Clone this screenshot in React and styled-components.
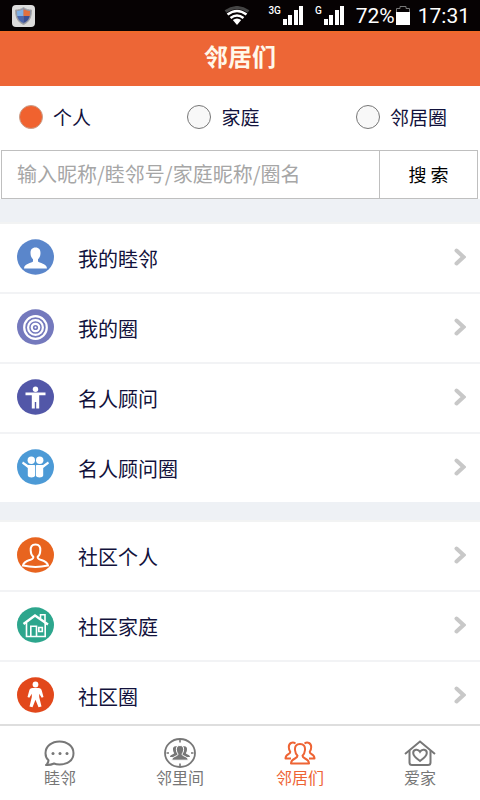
import React, { useState } from 'react'
import styled, { createGlobalStyle } from 'styled-components'

const GlobalStyle = createGlobalStyle`
  * { box-sizing: border-box; }
  body {
    margin: 0;
    background: #eef1f5;
    font-family: "Noto Sans CJK SC", "Noto Sans", sans-serif;
    color: #12123c;
  }
  button, input { font-family: inherit; }
`

const Page = styled.div`
  display: flex;
  flex-direction: column;
  height: 100vh;
`

const StatusBar = styled.div`
  display: flex;
  align-items: center;
  flex: none;
  height: 31px;
  padding: 0 10px 0 12px;
  background: #060203;
  color: #fff;
  font-family: Roboto, sans-serif;
  font-size: 21px;

  svg { display: block; }
`

const Spacer = styled.div`
  flex: 1;
`

const Signal = styled.div`
  display: flex;
  gap: 2px;
  margin-right: ${p => (p.$wide ? 18 : 12)}px;
`

const Network = styled.span`
  font-size: 10px;
  line-height: 10px;
  font-weight: 500;
`

const Battery = styled.div`
  display: flex;
  align-items: center;
  gap: 1px;
  margin-right: 8px;
`

const Header = styled.header`
  flex: none;
  height: 55px;
  background: #ed6636;
  border-top: 2px solid #f06a2a;
  color: #fff8ea;
  text-align: center;

  h1 {
    margin: 0;
    font-size: 24px;
    line-height: 46px;
    font-weight: 700;
  }
`

const Content = styled.main`
  flex: 1;
  min-height: 0;
  overflow-y: auto;
  scrollbar-width: none;
`

const SearchPanel = styled.form`
  background: #fff;
`

const Options = styled.div`
  display: flex;
  justify-content: space-between;
  align-items: center;
  height: 64px;
  padding: 0 33px 2px 19px;
`

const Option = styled.label`
  display: flex;
  align-items: center;
  gap: 10px;
  font-size: 19px;
  line-height: 24px;
`

const Radio = styled.input`
  appearance: none;
  width: 24px;
  height: 24px;
  margin: 0;
  border: 1px solid #777;
  border-radius: 50%;
  background: #f8f8f8;

  &:checked {
    border-color: #c9a08c;
    background: #f0622f;
  }
`

const SearchBox = styled.div`
  display: flex;
  height: 49px;
  margin: 0 2px 0 1px;
  border: 1px solid #bfbfbf;
`

const SearchInput = styled.input`
  flex: 1;
  min-width: 0;
  padding: 0 15px 2px;
  border: 0;
  background: #fff;
  font-size: 20px;
  outline: none;

  &::placeholder { color: #a6a6a6; }
`

const SearchButton = styled.button`
  width: 98px;
  padding: 0 0 2px;
  border: 0;
  border-left: 1px solid #bfbfbf;
  background: #fff;
  color: #000;
  font-size: 18px;
`

const Menu = styled.nav`
  margin-top: ${p => p.$gap}px;
  border-top: 2px solid #f2f3f3;
  background: #fff;
`

const MenuRow = styled.a`
  display: flex;
  align-items: center;
  height: 70px;
  padding: 0 14px 2px 17px;
  border-bottom: 2px solid #f2f3f5;
  color: #12123c;
  font-size: 20px;
  text-decoration: none;

  &:last-child {
    height: 68px;
    border-bottom: 0;
  }
`

const RowLabel = styled.span`
  flex: 1;
  padding: 2px 0 0 24px;
`

const TabBar = styled.nav`
  display: grid;
  grid-template-columns: repeat(4, 1fr);
  flex: none;
  height: 76px;
  border-top: 2px solid #dedede;
  background: #fff;
`

const Tab = styled.a`
  display: flex;
  flex-direction: column;
  align-items: center;
  padding-top: 11px;
  color: ${p => (p.$active ? '#ee6434' : '#777')};
  font-size: 16px;
  line-height: 18px;
  text-decoration: none;
`

const ShieldIcon = () => (
  <svg width="23" height="22" viewBox="0 0 23 22" aria-hidden="true">
    <rect width="23" height="22" rx="4" fill="#dcdcdc" />
    <path d="M11.500 2.500 C9 4.500 6 5 3.500 5 C3.500 12 5.500 17 11.500 19.500 C17.500 17 19.500 12 19.500 5 C17 5 14 4.500 11.500 2.500Z" fill="#8c93a6" stroke="#a5a5a5" />
    <path d="M11.500 4 C9 5.500 7 6 5 6 L5.300 11 H11.500Z" fill="#7fb0e6" />
    <path d="M11.500 4 C14 5.500 16 6 18 6 L17.700 11 H11.500Z" fill="#e2703f" />
    <path d="M5.300 11 H11.500 V18 C8 16.500 6 14.500 5.300 11Z" fill="#4a68b0" />
    <path d="M17.700 11 H11.500 V18 C15 16.500 17 14.500 17.700 11Z" fill="#3c4f94" />
  </svg>
)

const WifiIcon = () => (
  <svg width="26" height="19" viewBox="0 0 26 19" fill="none" aria-hidden="true">
    <path d="M1.500 5.500 Q13 -2.500 24.500 5.500" stroke="#444" strokeWidth="3" />
    <path d="M3.500 8.500 Q13 1.500 22.500 8.500" stroke="#fff" strokeWidth="2.600" />
    <path d="M6.500 12 Q13 7 19.500 12" stroke="#fff" strokeWidth="2.600" />
    <path d="M8.800 14 Q13 11 17.200 14 L13 19Z" fill="#fff" />
  </svg>
)

const BarsIcon = () => (
  <svg width="20" height="19" viewBox="0 0 20 19" fill="#fff" aria-hidden="true">
    <path d="M0 13h4v6H0zM5 9h4v10H5zM11 4h4v15h-4zM16 0h4v19h-4z" />
  </svg>
)

const BatteryIcon = () => (
  <svg width="14" height="19" viewBox="0 0 14 19" aria-hidden="true">
    <path d="M.5 18.500V2.500H4V.5H10V2.500H13.500V18.500Z" fill="none" stroke="#777" />
    <path d="M0 6H14V19H0z" fill="#fff" />
  </svg>
)

const Chevron = () => (
  <svg width="12" height="18" viewBox="0 0 12 18" fill="none" stroke="#c8c8c8" strokeWidth="4" aria-hidden="true">
    <path d="M2.500 2.500 L9.500 9 L2.500 15.500" strokeLinecap="round" />
  </svg>
)

// round badge behind every menu drawing
const Badge = ({ color, children }) => (
  <svg width="37" height="36" viewBox="0 0 37 36" aria-hidden="true">
    <ellipse cx="18.500" cy="18" rx="18.500" ry="17.700" fill={color} />
    {children}
  </svg>
)

const icons = {
  person: (
    <Badge color="#5a86cb">
      <path d="M18.500 8.500c-3.500 0-5 2.300-5 5.500 0 2.800 1 5 2.500 6.300v2.200c-1 1.500-9 2-9 7h23c0-5-8-5.500-9-7v-2.200c1.500-1.300 2.500-3.500 2.500-6.300 0-3.200-1.500-5.500-5-5.500z" fill="#fff" />
    </Badge>
  ),
  circles: (
    <Badge color="#7479bd">
      <g fill="none" stroke="#fff" strokeWidth="2.200">
        <circle cx="18.500" cy="18.500" r="11.300" />
        <circle cx="18.500" cy="18.500" r="7.400" />
        <circle cx="18.500" cy="18.500" r="3.700" />
      </g>
      <circle cx="18.500" cy="18.500" r="1" fill="#fff" />
    </Badge>
  ),
  advisor: (
    <Badge color="#5257a8">
      <circle cx="18.500" cy="10.300" r="2.700" fill="#fff" />
      <path d="M8.500 13.500h20v2.700h-6.300V29.500h-3v-6.500h-1.400v6.500h-3V16.200H8.500z" fill="#fff" />
    </Badge>
  ),
  pair: (
    <Badge color="#4c9ad6">
      <g fill="#fff">
        <circle cx="14.300" cy="11.300" r="3.700" />
        <circle cx="22.700" cy="11.300" r="3.700" />
        <path d="M6 12.500l5 3.500h6c.7 0 1.100.4 1.100 1v9.500c0 2.500-7.300 2.500-7.300 0v-7.500L5 14.500z" />
        <path d="M31 12.500L26 16h-6c-.7 0-1.100.4-1.100 1v9.500c0 2.500 7.300 2.500 7.300 0v-7.500l5.800-4.500z" />
      </g>
    </Badge>
  ),
  resident: (
    <Badge color="#e8641f">
      <path d="M18.500 7.500c-3.800 0-5 2.500-4.800 6 .1 2.800 1 5 2.600 6.300.4 2-.8 2.200-3 3-3.600 1.200-6.800 2.700-7.300 5.700 7 1.600 18 1.600 25 0-.5-3-3.700-4.500-7.300-5.700-2.200-.8-3.400-1-3-3 1.600-1.300 2.500-3.500 2.600-6.300.2-3.500-1-6-4.800-6z" fill="none" stroke="#fff" strokeWidth="2" />
    </Badge>
  ),
  family: (
    <Badge color="#2da68d">
      <g fill="none" stroke="#fff" strokeWidth="1.600">
        <path d="M6.500 17L18 8.500 31 17.500" strokeWidth="2.400" />
        <path d="M9.500 16v13.500h18.700V16" />
        <path d="M23.500 11.500V7.700h4.500v6.800" />
        <path d="M13.800 29V19.200h5.700V29" />
        <path d="M21.800 20.500h3.500v4h-3.500z" />
      </g>
    </Badge>
  ),
  walker: (
    <Badge color="#e2481b">
      <circle cx="18.500" cy="7.500" r="2.900" fill="#fff" />
      <path d="M15.500 11h6c2 0 2.800 1 3.300 2.800l1.700 6.200-1.800.8-2.500-4v3.200l2.300 9.500-3 .7-3-7.500-3 7.500-3-.7 2.300-9.500v-3.200l-2.500 4-1.800-.8 1.700-6.200c.5-1.800 1.300-2.800 3.300-2.800z" fill="#fff" />
    </Badge>
  ),
}

const ChatIcon = () => (
  <svg width="32" height="31" viewBox="0 0 32 31" aria-hidden="true">
    <path d="M4.500 23.300C2.500 21.500 1.500 19 1.500 16.200 1.500 9 8 4.500 15.500 4.500s14 4.500 14 11.700S23.500 27.500 15.500 27.500c-2 0-4-.3-5.500-1-2.500 1.300-5 1.700-8 1.500 1.500-1 2.300-2.700 2.500-4.700z" fill="none" stroke="currentColor" strokeWidth="2" strokeLinejoin="round" />
    <g fill="currentColor">
      <circle cx="9" cy="16.500" r="1.500" />
      <circle cx="16" cy="16.500" r="1.500" />
      <circle cx="23" cy="16.500" r="1.500" />
    </g>
  </svg>
)

const CircleIcon = () => (
  <svg width="32" height="31" viewBox="0 0 32 31" aria-hidden="true">
    <ellipse cx="16" cy="16" rx="15" ry="14" fill="none" stroke="currentColor" strokeWidth="1.800" />
    <path d="M16 3v2.500M16 26.500v2.500M2.500 16H5M27 16h2.500" stroke="currentColor" strokeWidth="1.600" />
    <g fill="currentColor">
      <path d="M13 9.500c-3-.6-4.300.8-4 3.200.1 1.600.6 2.600 1.200 3.300-.2 1.500-4.200 1.500-4.200 4h6l2.500-2.500c-1.800-1.500-3-5-1.500-8z" />
      <path d="M19 9.500c3-.6 4.300.8 4 3.200-.1 1.600-.6 2.600-1.200 3.300.2 1.500 4.200 1.500 4.200 4h-6L17.500 17.500c1.800-1.500 3-5 1.500-8z" />
      <path d="M16 8.500c-2.700 0-3.800 1.700-3.600 4.200.1 1.900.8 3.400 1.700 4.300-.2 2.500-6.100 2-6.300 6.200h16.400c-.2-4.200-6.100-3.700-6.300-6.200.9-.9 1.600-2.400 1.700-4.300.2-2.500-.9-4.200-3.600-4.200z" stroke="#fff" />
    </g>
  </svg>
)

const GroupIcon = () => (
  <svg width="32" height="31" viewBox="0 0 32 31" fill="none" stroke="currentColor" strokeWidth="2" strokeLinejoin="round" aria-hidden="true">
    <path d="M16 7c-3.800 0-5.300 2.500-5 6 .2 2.300 1 4.300 2.500 5.700.3 3.300-6.500 2.300-6.500 7.800h18c0-5.500-6.800-4.500-6.500-7.800 1.500-1.400 2.300-3.400 2.500-5.700.3-3.500-1.200-6-5-6z" />
    <path d="M11.500 6.500C8.500 4.500 4.800 6 4.800 10c0 2.200.5 3.700 1.500 4.800.2 2.700-4.800 2-4.800 6.700H7" />
    <path d="M20.500 6.500c3-2 6.700-.5 6.700 3.500 0 2.200-.5 3.700-1.500 4.800-.2 2.700 4.800 2 4.800 6.700H25" />
  </svg>
)

const HomeIcon = () => (
  <svg width="32" height="31" viewBox="0 0 32 31" fill="none" stroke="currentColor" strokeWidth="2" aria-hidden="true">
    <path d="M1 17L16 4.500 31 17" />
    <path d="M5.500 13.500V25.500c0 1.500.8 2.500 2.500 2.500h16c1.700 0 2.500-1 2.500-2.500V13.500" />
    <path d="M16 24c-4-2.800-6.800-5.200-6.800-8 0-3.500 4.800-4.500 6.800-1.200 2-3.300 6.800-2.300 6.800 1.200 0 2.800-2.800 5.200-6.800 8z" />
  </svg>
)

const options = ['个人', '家庭', '邻居圈']

const mine = [
  { icon: 'person', label: '我的睦邻' },
  { icon: 'circles', label: '我的圈' },
  { icon: 'advisor', label: '名人顾问' },
  { icon: 'pair', label: '名人顾问圈' },
]

const community = [
  { icon: 'resident', label: '社区个人' },
  { icon: 'family', label: '社区家庭' },
  { icon: 'walker', label: '社区圈' },
]

const tabs = [
  { Icon: ChatIcon, label: '睦邻' },
  { Icon: CircleIcon, label: '邻里间' },
  { Icon: GroupIcon, label: '邻居们' },
  { Icon: HomeIcon, label: '爱家' },
]

const MenuList = ({ items, gap }) => (
  <Menu $gap={gap}>
    {items.map(item => (
      <MenuRow href="#" key={item.label}>
        {icons[item.icon]}
        <RowLabel>{item.label}</RowLabel>
        <Chevron />
      </MenuRow>
    ))}
  </Menu>
)

const App = () => {
  const [scope, setScope] = useState('个人')
  const [tab, setTab] = useState('邻居们')

  return (
    <Page>
      <GlobalStyle />
      <StatusBar>
        <ShieldIcon />
        <Spacer />
        <Signal $wide>
          <WifiIcon />
        </Signal>
        <Signal>
          <Network>3G</Network>
          <BarsIcon />
        </Signal>
        <Signal>
          <Network>G</Network>
          <BarsIcon />
        </Signal>
        <Battery>
          <span>72%</span>
          <BatteryIcon />
        </Battery>
        <span>17:31</span>
      </StatusBar>

      <Header>
        <h1>邻居们</h1>
      </Header>

      <Content>
        <SearchPanel onSubmit={e => e.preventDefault()}>
          <Options>
            {options.map(name => (
              <Option key={name}>
                <Radio
                  type="radio"
                  name="scope"
                  checked={scope === name}
                  onChange={() => setScope(name)}
                />
                {name}
              </Option>
            ))}
          </Options>
          <SearchBox>
            <SearchInput
              type="text"
              aria-label="搜索"
              placeholder="输入昵称/睦邻号/家庭昵称/圈名"
            />
            <SearchButton type="submit">搜 索</SearchButton>
          </SearchBox>
        </SearchPanel>

        <MenuList items={mine} gap={23} />
        <MenuList items={community} gap={18} />
      </Content>

      <TabBar>
        {tabs.map(({ Icon, label }) => (
          <Tab href="#" key={label} $active={tab === label} onClick={() => setTab(label)}>
            <Icon />
            {label}
          </Tab>
        ))}
      </TabBar>
    </Page>
  )
}

export default App
